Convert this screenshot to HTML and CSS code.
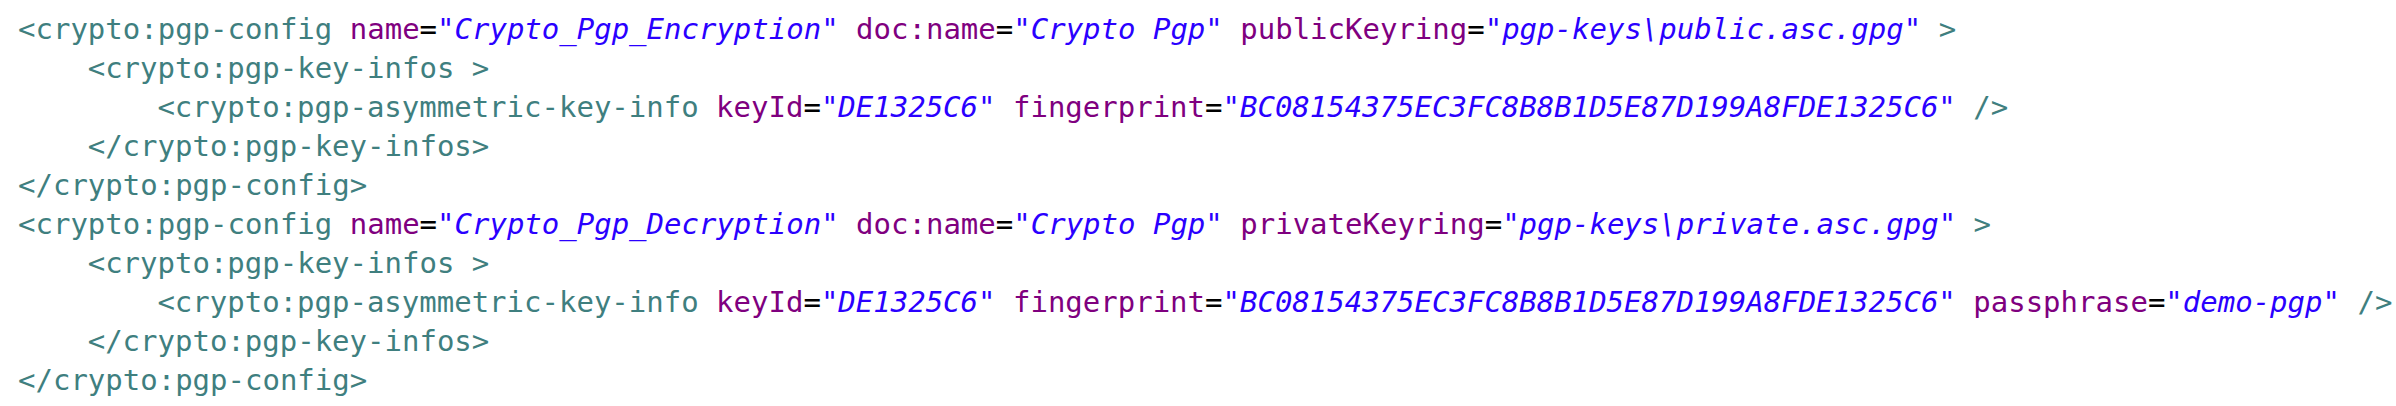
FILE: index.html
```html
<!DOCTYPE html>
<html>
<head>
<meta charset="utf-8">
<link rel="stylesheet" href="styles.css">
</head>
<body>
<div class="code">
<div class="line"><span class="t">&lt;crypto:pgp-config</span> <span class="a">name</span><span class="e">=</span><span class="v">"Crypto_Pgp_Encryption"</span> <span class="a">doc:name</span><span class="e">=</span><span class="v">"Crypto Pgp"</span> <span class="a">publicKeyring</span><span class="e">=</span><span class="v">"pgp-keys\public.asc.gpg"</span> <span class="t">&gt;</span></div>
<div class="line l1"><span class="t">&lt;crypto:pgp-key-infos &gt;</span></div>
<div class="line l2"><span class="t">&lt;crypto:pgp-asymmetric-key-info</span> <span class="a">keyId</span><span class="e">=</span><span class="v">"DE1325C6"</span> <span class="a">fingerprint</span><span class="e">=</span><span class="v">"BC08154375EC3FC8B8B1D5E87D199A8FDE1325C6"</span> <span class="t">/&gt;</span></div>
<div class="line l1"><span class="t">&lt;/crypto:pgp-key-infos&gt;</span></div>
<div class="line"><span class="t">&lt;/crypto:pgp-config&gt;</span></div>
<div class="line"><span class="t">&lt;crypto:pgp-config</span> <span class="a">name</span><span class="e">=</span><span class="v">"Crypto_Pgp_Decryption"</span> <span class="a">doc:name</span><span class="e">=</span><span class="v">"Crypto Pgp"</span> <span class="a">privateKeyring</span><span class="e">=</span><span class="v">"pgp-keys\private.asc.gpg"</span> <span class="t">&gt;</span></div>
<div class="line l1"><span class="t">&lt;crypto:pgp-key-infos &gt;</span></div>
<div class="line l2"><span class="t">&lt;crypto:pgp-asymmetric-key-info</span> <span class="a">keyId</span><span class="e">=</span><span class="v">"DE1325C6"</span> <span class="a">fingerprint</span><span class="e">=</span><span class="v">"BC08154375EC3FC8B8B1D5E87D199A8FDE1325C6"</span> <span class="a">passphrase</span><span class="e">=</span><span class="v">"demo-pgp"</span> <span class="t">/&gt;</span></div>
<div class="line l1"><span class="t">&lt;/crypto:pgp-key-infos&gt;</span></div>
<div class="line"><span class="t">&lt;/crypto:pgp-config&gt;</span></div>
</div>
</body>
</html>
```

FILE: styles.css
```css
html, body {
  margin: 0;
  padding: 0;
  background: #ffffff;
}
.code {
  padding: 10px 0 0 18px;
  font-family: "DejaVu Sans Mono", "Liberation Mono", monospace;
  font-size: 29px;
  line-height: 39px;
}
.line {
  white-space: pre;
}
.l1 { padding-left: 69.7px; }
.l2 { padding-left: 139.4px; }
.t { color: #3f7f7f; }
.a { color: #7f007f; }
.e { color: #000000; }
.v { color: #2a00ff; font-style: italic; }
```
